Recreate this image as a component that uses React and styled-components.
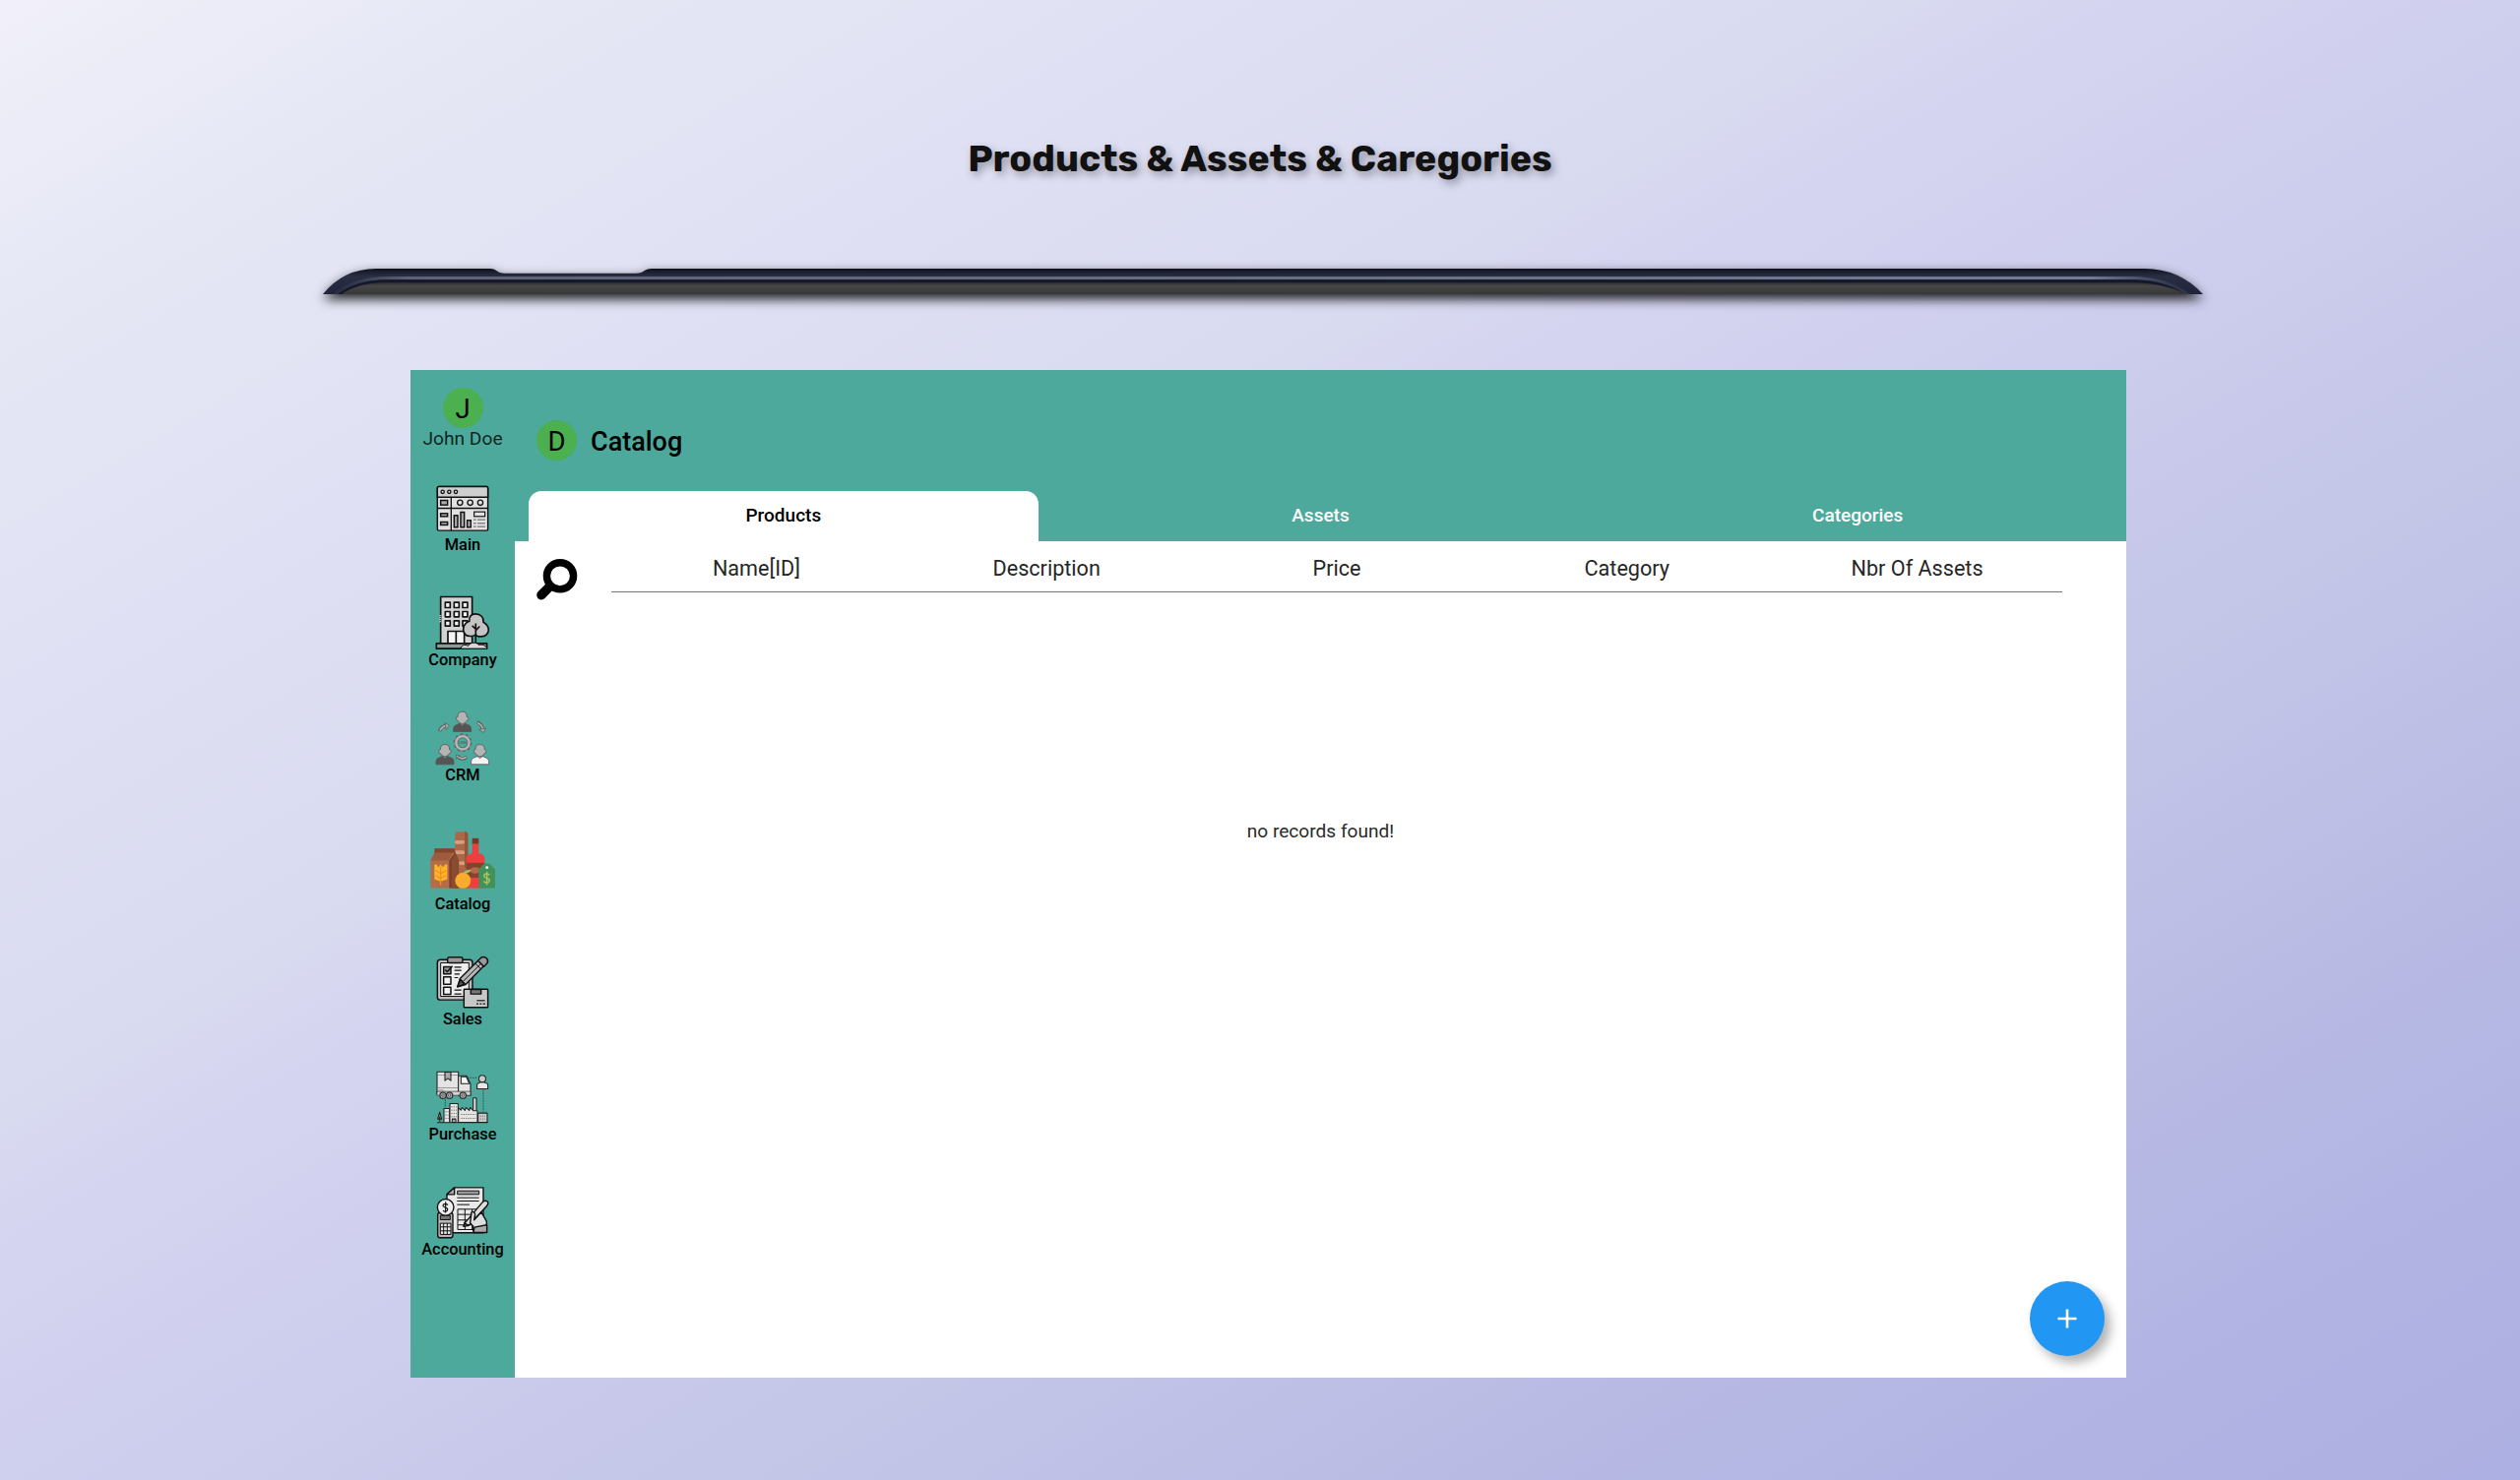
import React from "react";
import styled, { createGlobalStyle } from "styled-components";

const Global = createGlobalStyle`
  * { box-sizing: border-box; }
  html, body { margin: 0; padding: 0; }
  body { font-family: Roboto, "Liberation Sans", sans-serif; }
`;

const Page = styled.main`
  width: 2560px;
  height: 1504px;
  display: flex;
  flex-direction: column;
  overflow: hidden;
  background: linear-gradient(to bottom right, #f1f0fa 0%, #e6e8f5 10%, #dfe0f3 24%, #d8daf0 38%, #d5d4f0 42%, #cfcfee 50%, #c4c6e8 65%, #b9bbe4 78%, #b2b4e3 88%, #adb0e2 100%);
`;

const Title = styled.h1`
  margin: 137px 0 0;
  height: 48px;
  line-height: 48px;
  text-align: center;
  font-family: Rubik, Inter, sans-serif;
  font-size: 37.5px;
  font-weight: 700;
  color: #111;
  text-shadow: 3px 4px 8px rgba(0, 0, 0, 0.35);
`;

const Device = styled.svg`
  display: block;
  width: 1910px;
  height: 26px;
  margin: 88px 0 0 328px;
  overflow: visible;
  filter: drop-shadow(0 5px 6px rgba(0, 0, 0, 0.85));
`;

const Window = styled.section`
  width: 1743px;
  height: 1024px;
  margin: 77px 0 0 417px;
  display: flex;
  background: #4ca99b;
`;

const Sidebar = styled.nav`
  width: 106px;
  padding-top: 18px;
  display: flex;
  flex-direction: column;
  align-items: center;
`;

const Avatar = styled.div`
  width: 41px;
  height: 41px;
  border-radius: 50%;
  background: #4caf50;
  color: #000;
  text-align: center;
  font-size: 27.5px;
  line-height: 43px;
`;

const UserName = styled.div`
  margin-bottom: 33px;
  height: 21.5px;
  line-height: 22px;
  font-size: 19.2px;
  white-space: nowrap;
  color: rgba(0, 0, 0, 0.8);
`;

const NavItem = styled.a`
  display: flex;
  flex-direction: column;
  align-items: center;
  margin-bottom: 44.7px;
`;

const NavIcon = styled.svg`
  display: block;
  width: ${(p) => p.$size}px;
  height: ${(p) => p.$size}px;
  overflow: visible;
`;

const NavLabel = styled.span`
  height: 19px;
  line-height: 21px;
  font-size: 16.4px;
  font-weight: 500;
  color: #000;
`;

const Main = styled.div`
  flex: 1;
  display: flex;
  flex-direction: column;
`;

const Header = styled.header`
  height: 122px;
  padding: 50.5px 0 0 22px;
  display: flex;
  gap: 14px;
`;

const Heading = styled.h2`
  margin: 0;
  font-size: 27px;
  line-height: 44px;
  font-weight: 500;
  color: #000;
`;

const Tabs = styled.div`
  height: 52px;
  display: grid;
  grid-template-columns: repeat(3, 1fr);
`;

const Tab = styled.div`
  margin: 0.5px 14px 0;
  padding-bottom: 1.5px;
  display: flex;
  align-items: center;
  justify-content: center;
  border-radius: 13px 13px 0 0;
  font-size: 19px;
  font-weight: 500;
  color: ${(p) => (p.$active ? "#000" : "#fff")};
  background: ${(p) => (p.$active ? "#fff" : "transparent")};
`;

const Body = styled.div`
  flex: 1;
  display: flex;
  flex-direction: column;
  background: #fff;
`;

const Toolbar = styled.div`
  display: flex;
  height: 70px;
  padding-left: 22px;
`;

const SearchIcon = styled.svg`
  width: 42px;
  height: 42px;
  margin: 18px 34px 0 0;
`;

const Columns = styled.div`
  width: 1474px;
  height: 52px;
  display: grid;
  grid-template-columns: repeat(5, 1fr);
  border-bottom: 1px solid #767676;
`;

const Column = styled.div`
  padding-top: 15px;
  text-align: center;
  font-size: 21.6px;
  line-height: 26px;
  color: #262626;
`;

const Empty = styled.div`
  margin-top: 213px;
  text-align: center;
  font-size: 19.1px;
  line-height: 24px;
  color: #2a2a2a;
`;

const Fab = styled.button`
  width: 76px;
  height: 76px;
  margin: auto 22px 22px auto;
  padding: 0;
  border: 0;
  border-radius: 50%;
  display: grid;
  place-items: center;
  background: #2196f3;
  box-shadow: 6px 7px 11px rgba(0, 0, 0, 0.3);
`;

const MainIcon = () => (
  <g stroke="#111" strokeWidth="4.4" fill="#e2e2e2">
    <rect x="74" y="42" width="154" height="134" rx="4" />
    <path d="M74 74V46q0-4 4-4h146q4 0 4 4v28z" fill="#cfcfcf" />
    <path d="M74 108h154M116 74v102" fill="none" strokeWidth="4" />
    <g strokeWidth="4">
      <circle cx="90" cy="58" r="5" /><circle cx="110" cy="58" r="5" /><circle cx="130" cy="58" r="5" />
      <circle cx="143" cy="91" r="8" /><circle cx="174" cy="91" r="8" /><circle cx="205" cy="91" r="8" />
    </g>
    <g fill="#aaa">
      <rect x="84" y="84" width="21" height="14" /><rect x="84" y="124" width="21" height="9" /><rect x="84" y="150" width="21" height="9" />
      <rect x="125" y="130" width="11" height="36" /><rect x="145" y="120" width="11" height="46" /><rect x="165" y="145" width="11" height="21" />
    </g>
    <rect x="186" y="119" width="33" height="14" strokeWidth="3.5" />
    <path d="M184 143h8m4 0h24M184 154h8m4 0h24M184 164h8m4 0h24" strokeWidth="2.6" stroke="#444" />
  </g>
);

const CompanyIcon = () => (
  <g stroke="#111" strokeWidth="5" fill="#d3d3d3" strokeLinejoin="round">
    <path d="M84 524V381h96v143z" />
    <path d="M83 437v22" stroke="#d9d9d9" strokeWidth="6" strokeDasharray="3 3" />
    <g fill="#f4f4f4">
      {[398, 426, 454].map((y) => [98, 125, 151].map((x) => <rect key={`${x}-${y}`} x={x} y={y} width="15" height="16" />))}
      <path d="M106 522v-36h50v36M131 486v36" />
    </g>
    <path d="M71 523h154v16H71z" fill="#8d9a96" />
    <path d="M190 433c-14 0-20 10-18 22-10 3-21 14-19 27 2 15 12 20 24 19 6 0 10-2 13-4 4 4 10 6 18 5 13 0 22-9 22-20 0-12-7-19-16-24 2-14-8-25-24-25z" fill="#c4c4c4" />
    <path d="M191 462v60M191 479l-11-10M191 484l12-13" fill="none" strokeWidth="5" />
    <path d="M146 539c0-10 11-14 22-8 6-12 25-13 32-3 11-3 25 3 25 11z" fill="#d9d9d9" strokeWidth="3" />
  </g>
);

const Person = ({ x, y, shirt }) => (
  <g transform={`translate(${x} ${y})`} stroke="#555" strokeWidth="2.4">
    <path d="M-27 62v-9q0-9 10-12l10-4h14l10 4q10 3 10 12v9z" fill={shirt} />
    <path d="M-7 28v10l7 5 7-5V28z" fill="#a2a2a2" />
    <path d="M-14 17q-6 0-5 6 1 6 6 6 4 9 13 9t13-9q5 0 6-6 1-6-5-6Q14 1 0 1t-14 16z" fill="#b4b4b4" />
  </g>
);

const CrmIcon = () => (
  <g>
    <Person x={150} y={40} shirt="#555" />
    <Person x={97} y={140} shirt="#555" />
    <Person x={204} y={140} shirt="#f3f3f3" />
    <circle cx="151" cy="136" r="25" fill="none" stroke="#666" strokeWidth="7" strokeDasharray="8 7.7" />
    <circle cx="151" cy="136" r="19.5" fill="none" stroke="#666" strokeWidth="11" />
    <circle cx="151" cy="136" r="20" fill="none" stroke="#b8b8b8" strokeWidth="7" />
    <text x="151" y="140" textAnchor="middle" fontSize="11" fontWeight="700" fill="#4f6f6a">CRM</text>
    <g fill="none">
      <g stroke="#555" strokeWidth="10">
        <path d="M81 101q4-14 19-17M195 74q15 5 17 21M136 178q13 12 27 2" />
      </g>
      <g stroke="#b0b0b0" strokeWidth="5.5">
        <path d="M82 99q5-12 18-15M196 75q14 5 16 19M137 179q12 9 25 1" />
      </g>
    </g>
    <path d="M97 75l13 8-9 13zM222 91l-7 14-14-9zM131 185v-12l11 2z" fill="#a8a8a8" stroke="#555" strokeWidth="2" />
  </g>
);

const CatalogIcon = () => (
  <g>
    <path d="M127 579V417q0-10 10-10h20q9 0 9 10v162z" fill="#aa6848" />
    <path d="M156 407h1q9 0 9 10v100h-10z" fill="#955638" />
    <path d="M131 439h20M131 470h20M144 503h7" stroke="#d99b80" strokeWidth="11" strokeLinecap="round" />
    <path d="M179 427h20v18h-20z" fill="#743a22" />
    <path d="M179 444h20v29q18 2 18 17v89h-56v-89q0-14 18-17z" fill="#ee3f40" />
    <path d="M161 502h56v45h-56z" fill="#85432b" />
    <ellipse cx="188" cy="525" rx="14" ry="10" fill="#b0694d" />
    <path d="M64 458h62v16H64z" fill="#85452c" />
    <path d="M64 472h62l10 107H52v-84z" fill="#b56c49" />
    <path d="M64 472h54l-10 23H52z" fill="#9e5b3e" />
    <path d="M126 465l12 30v84h-29v-84l16-23z" fill="#7b3f28" />
    <path d="M116 495l11-24 10 25v83h-21z" fill="#8a4b31" />
    <path d="M64 507h7l5 9 7-9 7 9 6-9h7v45l-15 5h-9l-15-5z" fill="#ffb52b" />
    <path d="M67 525l16 10 17-10M67 540l16 9 17-9M83 514v56" stroke="#f19122" strokeWidth="4" fill="none" />
    <circle cx="151" cy="556" r="24" fill="#f9ac2e" />
    <path d="M151 535q6-14 26-12-6 13-26 12z" fill="#a9bd68" />
    <path d="M199 579v-58l17-17h15l18 17v58z" fill="#40925a" />
    <circle cx="224" cy="516" r="4.5" fill="#e9eedf" />
    <path d="M232 539q-8-7-15-2-5 6 3 10l8 3q7 5 1 11-7 5-15-3M224 529v41" fill="none" stroke="#aebf60" strokeWidth="4.5" />
  </g>
);

const SalesIcon = () => (
  <g stroke="#111" strokeWidth="4.4" fill="#c8c8c8" strokeLinejoin="round">
    <rect x="74" y="46" width="107" height="123" rx="9" fill="#bcbcbc" />
    <path d="M84 56h86v102H84z" fill="#eee" strokeWidth="3" />
    <rect x="105" y="39" width="46" height="17" rx="5" fill="#999" />
    <g fill="#f1f1f1">
      <rect x="93" y="68" width="22" height="22" fill="#999" /><rect x="93" y="99" width="22" height="22" /><rect x="93" y="130" width="22" height="22" />
    </g>
    <path d="M98 77l6 6 16-17" fill="none" strokeWidth="4.5" />
    <path d="M126 69h21M126 79h21M126 90h16M126 101h11M126 139h21M126 151h21" strokeWidth="3.5" />
    <path d="M143 104l55-55 17 17-55 56-24 7z" fill="#b8b8b8" />
    <path d="M152 113l55-55M189 57l17 17M143 104l17 17" fill="none" strokeWidth="3" />
    <path d="M198 49l9-9q8-5 16 1 8 8 3 16l-10 10z" fill="#999" />
    <path d="M144 107l-9 22 22-8z" fill="#555" />
    <rect x="155" y="136" width="73" height="56" rx="2" />
    <path d="M176 137h31v14h-31z" fill="#777" />
    <path d="M194 171h25" strokeWidth="3.5" />
    <path d="M193 181h6m4 0h6m4 0h7" strokeWidth="4" />
  </g>
);

const PurchaseIcon = () => (
  <g stroke="#222" strokeWidth="3.2" fill="#e4e4e4" strokeLinejoin="round">
    <path d="M165 46h32M214 83v67M98 112v26" fill="none" stroke="#235b54" strokeDasharray="5 3" />
    <path d="M73 28h65v68H73z" />
    <path d="M73 38h65M73 77h65M77 84h16" fill="none" strokeWidth="1.8" stroke="#666" />
    <path d="M97 29h18v26l-9-7-9 7z" fill="#aaa" />
    <path d="M138 40h25l12 25v35h-37z" />
    <path d="M146 43h16l9 21h-25z" fill="#f7f7f7" />
    <path d="M73 88h102v12H73z" fill="#d5d5d5" strokeWidth="2" />
    {[91, 111, 152].map((x) => (
      <g key={x}>
        <circle cx={x} cy="100" r="9.5" fill="#aaa" />
        <circle cx={x} cy="100" r="3.5" fill="#eee" strokeWidth="2" />
      </g>
    ))}
    <path d="M195 80V68q0-5 6-6l5-2h10l5 2q7 1 7 6v12z" fill="#e8e8e8" />
    <circle cx="211" cy="49" r="10.5" fill="#ccc" />
    <path d="M81 180v-16M81 151l-6 21h12z" fill="#999" />
    <path d="M94 182v-42h17v42M112 182v-57h25v57" />
    <path d="M119 182v-10h11v10z" fill="#aaa" />
    <path d="M183 145v-37h10v40" fill="#d5d5d5" />
    <path d="M138 182v-44l8 7 3-8 9 9 3-9 10 9 3-9 10 10h12v35z" />
    <path d="M198 182v-28h28v28z" fill="#c9c9c9" />
    <path d="M73 183h155" />
    <path d="M116 135h17M116 145h17M116 155h17M116 165h17M98 150h10M98 160h10M98 170h10M146 158h45M146 170h45M204 163h16M204 172h16" stroke="#777" strokeWidth="3" strokeDasharray="4 3" />
  </g>
);

const AccountingIcon = () => (
  <g stroke="#111" strokeWidth="4.2" fill="#e9e9e9" strokeLinejoin="round">
    <path d="M103 519V402l23-21h88v138z" />
    <path d="M103 402h23v-21z" fill="#aaa" />
    <path d="M135 391h66v11h-66z" fill="#999" strokeWidth="3" />
    <path d="M134 412h67M134 422h67M134 433h38" strokeWidth="3" />
    <path d="M136 447h66v62h-66zM136 463h66M136 480h66M136 495h66M158 447v62M180 447v62" fill="none" strokeWidth="3" />
    <path d="M157 490l51-60q8-12 18-7 6 6-2 15l-52 56-18 5z" fill="#ddd" />
    <path d="M154 499l3-10 12 8z" fill="#555" />
    <path d="M174 489l4-33q8-4 11 7l-3 17 22-24 16 28v29h-41v-14z" fill="#dedede" />
    <path d="M184 518l3-16 38-7v23z" fill="#aaa" />
    <rect x="75" y="457" width="46" height="77" rx="8" fill="#b8b8b8" />
    <path d="M83 466h30v13H83z" fill="#777" strokeWidth="3" />
    <path d="M83 490h32v34H83zM93 490v34M104 490v34M83 501h32M83 513h32" strokeWidth="3" />
    <circle cx="99" cy="441" r="25" fill="#eee" />
    <path d="M106 434q-7-6-13-2-5 5 3 9l7 3q5 4-1 9-6 3-11-2M99 424v34" fill="none" strokeWidth="3.5" />
  </g>
);

const NAV = [
  { label: "Main", box: "70 28.5 160 160", Icon: MainIcon },
  { label: "Company", box: "70 379.5 160 160", Icon: CompanyIcon },
  { label: "CRM", box: "70 40.5 160 160", Icon: CrmIcon },
  { label: "Catalog", box: "48 391.5 204 204", Icon: CatalogIcon, size: 68 },
  { label: "Sales", box: "70 36.5 160 160", Icon: SalesIcon },
  { label: "Purchase", box: "70 27.5 160 160", Icon: PurchaseIcon },
  { label: "Accounting", box: "70 378.5 160 160", Icon: AccountingIcon },
];

const COLUMNS = ["Name[ID]", "Description", "Price", "Category", "Nbr Of Assets"];
const TABS = ["Products", "Assets", "Categories"];

function DeviceEdge() {
  return (
    <Device viewBox="0 0 1910 26">
      <defs>
        <clipPath id="edge">
          <path d="M0 26Q21 0 54 0H170C177 0 176 4.7 185 4.7H318C327 4.7 326 0 334 0H1851Q1886 0 1910 26Z" />
        </clipPath>
        <linearGradient id="navy" x1="0" y1="0" x2="0" y2="1">
          <stop offset="0" stopColor="#0d0f17" />
          <stop offset="0.12" stopColor="#1b1e2f" />
          <stop offset="0.3" stopColor="#2a2e43" />
          <stop offset="1" stopColor="#1f243a" />
        </linearGradient>
        <linearGradient id="glass" x1="0" y1="0" x2="0" y2="1">
          <stop offset="0" stopColor="#2b2b2c" />
          <stop offset="0.3" stopColor="#464646" />
          <stop offset="1" stopColor="#373737" />
        </linearGradient>
        <linearGradient id="shine" gradientUnits="userSpaceOnUse" x1="0" y1="0" x2="1910" y2="0">
          <stop offset="0.01" stopColor="#2b2f47" />
          <stop offset="0.045" stopColor="#5d6174" />
          <stop offset="0.94" stopColor="#737b90" />
          <stop offset="0.985" stopColor="#30344c" />
        </linearGradient>
      </defs>
      <g clipPath="url(#edge)">
        <path d="M0 0h1910v26H0z" fill="url(#navy)" />
        <path d="M10 28Q30 9.5 66 9.5H1838Q1874 9.5 1897 28" fill="none" stroke="url(#shine)" strokeWidth="3" />
        <path d="M15 28Q34 12.7 66 12.7H1838Q1870 12.7 1892 28" fill="none" stroke="#14182a" strokeWidth="3" />
        <path d="M19 26Q36 14 66 14H1835Q1868 14 1893 26Z" fill="url(#glass)" />
      </g>
    </Device>
  );
}

export default function App() {
  return (
    <Page>
      <Global />
      <Title>Products &amp; Assets &amp; Caregories</Title>
      <DeviceEdge />
      <Window>
        <Sidebar>
          <Avatar>J</Avatar>
          <UserName>John Doe</UserName>
          {NAV.map(({ label, box, Icon, size = 53.3 }) => (
            <NavItem key={label}>
              <NavIcon viewBox={box} $size={size}><Icon /></NavIcon>
              <NavLabel>{label}</NavLabel>
            </NavItem>
          ))}
        </Sidebar>
        <Main>
          <Header>
            <Avatar>D</Avatar>
            <Heading>Catalog</Heading>
          </Header>
          <Tabs>
            {TABS.map((t, i) => <Tab key={t} $active={i === 0}>{t}</Tab>)}
          </Tabs>
          <Body>
            <Toolbar>
              <SearchIcon viewBox="0 0 42 42">
                <circle cx="24" cy="17.3" r="13.6" fill="none" stroke="#000" strokeWidth="7.4" />
                <path d="M13 28.5L5 36.7" stroke="#000" strokeWidth="9.6" strokeLinecap="round" />
              </SearchIcon>
              <Columns>
                {COLUMNS.map((c) => <Column key={c}>{c}</Column>)}
              </Columns>
            </Toolbar>
            <Empty>no records found!</Empty>
            <Fab aria-label="Add">
              <svg width="20" height="20" viewBox="0 0 20 20">
                <path d="M10 0.5v19M0.5 10h19" stroke="#fff" strokeWidth="2.6" />
              </svg>
            </Fab>
          </Body>
        </Main>
      </Window>
    </Page>
  );
}
